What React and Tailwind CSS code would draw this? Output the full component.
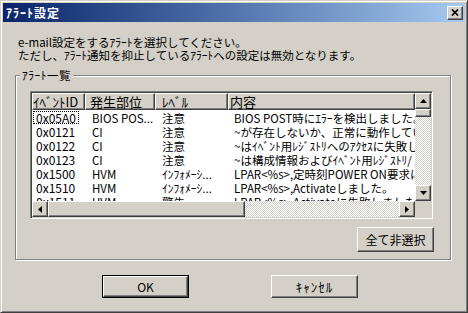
import React from 'react';

const alerts = [
  { id: '0x05A0', part: 'BIOS POS...', level: '注意', text: 'BIOS POST時にｴﾗｰを検出しました。' },
  { id: '0x0121', part: 'CI', level: '注意', text: '~が存在しないか、正常に動作していません。' },
  { id: '0x0122', part: 'CI', level: '注意', text: '~はｲﾍﾞﾝﾄ用ﾚｼﾞｽﾄﾘへのｱｸｾｽに失敗しました。' },
  { id: '0x0123', part: 'CI', level: '注意', text: '~は構成情報およびｲﾍﾞﾝﾄ用ﾚｼﾞｽﾄﾘ/' },
  { id: '0x1500', part: 'HVM', level: 'ｲﾝﾌｫﾒｰｼ...', text: 'LPAR<%s>,定時刻POWER ON要求に。' },
  { id: '0x1510', part: 'HVM', level: 'ｲﾝﾌｫﾒｰｼ...', text: 'LPAR<%s>,Activateしました。' },
  { id: '0x1511', part: 'HVM', level: '警告', text: 'LPAR<%s>,Activateに失敗しました。(F' },
];

// classic 3D raised edge
const raised =
  'bg-[#d4d0c8] border border-t-white border-l-white border-r-[#404040] border-b-[#404040] shadow-[inset_-1px_-1px_#808080]';

const checker =
  'bg-[image:repeating-conic-gradient(#ffffff_0_25%,#d4d0c8_0_50%)] bg-[length:2px_2px]';

function Arrow({ dir }) {
  const pts = {
    up: '3.5,0 7,4 0,4',
    down: '0,0 7,0 3.5,4',
    left: '4,0 4,7 0,3.5',
    right: '0,0 4,3.5 0,7',
  }[dir];
  const vertical = dir === 'up' || dir === 'down';
  return (
    <svg width={vertical ? 7 : 4} height={vertical ? 4 : 7} viewBox={vertical ? '0 0 7 4' : '0 0 4 7'}>
      <polygon points={pts} fill="#000" />
    </svg>
  );
}

function ScrollButton({ dir }) {
  return (
    <div className={`w-[16px] h-[16px] shrink-0 flex items-center justify-center ${raised}`}>
      <Arrow dir={dir} />
    </div>
  );
}

export default function App() {
  return (
    <div className="w-[468px] h-[313px] overflow-hidden bg-[#d4d0c8] p-[2px] border border-t-[#d4d0c8] border-l-[#d4d0c8] border-r-[#404040] border-b-[#404040] shadow-[inset_1px_1px_#ffffff,inset_-1px_-1px_#808080] font-['Noto_Sans_CJK_JP',sans-serif] text-[11.5px] text-black flex flex-col">
      {/* title bar */}
      <div className="h-[19px] shrink-0 flex items-center justify-between pl-[3px] pr-[2px] bg-linear-to-r from-[#0a246a] to-[#a6caf0]">
        <span className="text-white font-bold text-[12px] leading-none tracking-[1px]">ｱﾗｰﾄ設定</span>
        <div className={`w-[16px] h-[14px] flex items-center justify-center ${raised}`}>
          <svg width="8" height="7" viewBox="0 0 8 7">
            <path d="M1 0.5L7 6.5M7 0.5L1 6.5" stroke="#000" strokeWidth="1.7" />
          </svg>
        </div>
      </div>

      <div className="flex flex-col pt-[14px]">
        <div className="pl-[15px] leading-[13px]">
          <p>e-mail設定をするｱﾗｰﾄを選択してください。</p>
          <p>ただし、ｱﾗｰﾄ通知を抑止しているｱﾗｰﾄへの設定は無効となります。</p>
        </div>

        {/* group box */}
        <div className="mt-[13px] ml-[12px] w-[436px] border border-[#808080] shadow-[inset_1px_1px_#ffffff,1px_1px_#ffffff] pl-[14px] pr-[17px] pb-[7px] flex flex-col">
          <div className="-mt-[7px] -ml-[10px] w-fit px-[2px] bg-[#d4d0c8] leading-[13px] tracking-[0.5px]">ｱﾗｰﾄ一覧</div>

          {/* list view */}
          <div className="mt-[9px] h-[128px] p-[1px] bg-white border border-t-[#808080] border-l-[#808080] border-r-white border-b-white shadow-[inset_1px_1px_#404040,inset_-1px_-1px_#d4d0c8]">
            <div className="h-full grid grid-cols-[1fr_16px] grid-rows-[1fr_16px]">
              <div className="overflow-hidden bg-white flex flex-col">
                <div className="flex h-[17px] shrink-0 text-[13px] leading-[15px] whitespace-nowrap">
                  <div className={`w-[53px] shrink-0 ${raised}`}>ｲﾍﾞﾝﾄID</div>
                  <div className={`w-[70px] shrink-0 pl-[4px] ${raised}`}>発生部位</div>
                  <div className={`w-[73px] shrink-0 pl-[6px] ${raised}`}>ﾚﾍﾞﾙ</div>
                  <div className={`flex-1 pl-[1px] ${raised}`}>内容</div>
                </div>
                {alerts.map((a, i) => (
                  <div key={a.id} className="flex h-[14px] shrink-0 leading-[12px] whitespace-nowrap">
                    <div className="w-[53px] shrink-0 pl-[1px] pt-[1px]">
                      <span
                        className={`inline-block w-[46px] h-[13px] pl-[2px] text-[12px] border border-dotted ${
                          i === 0 ? 'border-black' : 'border-transparent'
                        }`}
                      >
                        {a.id}
                      </span>
                    </div>
                    <div className="w-[70px] shrink-0 pl-[7px] pt-[2px]">{a.part}</div>
                    <div className="w-[73px] shrink-0 pl-[7px] pt-[2px]">{a.level}</div>
                    <div className="flex-1 pl-[6px] pt-[2px]">{a.text}</div>
                  </div>
                ))}
              </div>

              {/* vertical scrollbar */}
              <div className="flex flex-col">
                <ScrollButton dir="up" />
                <div className={`h-[8px] shrink-0 ${raised}`} />
                <div className={`flex-1 ${checker}`} />
                <ScrollButton dir="down" />
              </div>

              {/* horizontal scrollbar */}
              <div className="flex">
                <ScrollButton dir="left" />
                <div className={`w-[197px] shrink-0 ${raised}`} />
                <div className={`flex-1 ${checker}`} />
                <ScrollButton dir="right" />
              </div>
              <div className="bg-[#d4d0c8]" />
            </div>
          </div>

          <button className={`self-end -mr-[1px] mt-[8px] w-[77px] h-[25px] text-[12px] leading-none ${raised}`}>
            全て非選択
          </button>
        </div>

        {/* dialog buttons */}
        <div className="flex gap-[82px] pl-[99px] mt-[15px]">
          <div className="w-[87px] h-[23px] border border-black">
            <button className={`w-full h-full text-[12px] leading-none ${raised}`}>OK</button>
          </div>
          <button className={`w-[87px] h-[23px] text-[13px] leading-none tracking-[1px] ${raised}`}>ｷｬﾝｾﾙ</button>
        </div>
      </div>
    </div>
  );
}
